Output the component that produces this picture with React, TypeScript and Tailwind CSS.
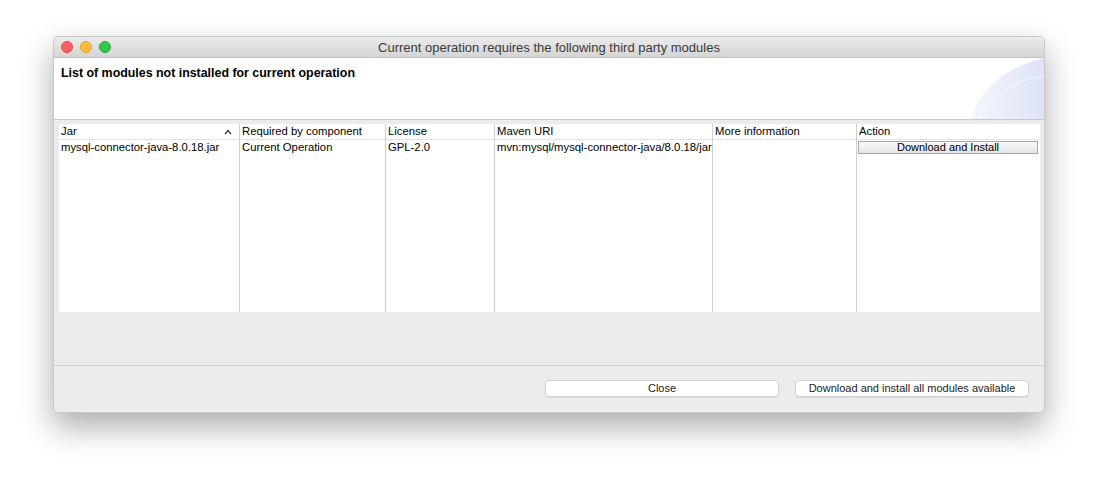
import React from "react";

const cols = [
  { w: 181, h: "Jar", v: "mysql-connector-java-8.0.18.jar" },
  { w: 146, h: "Required by component", v: "Current Operation" },
  { w: 109, h: "License", v: "GPL-2.0" },
  { w: 218, h: "Maven URI", v: "mvn:mysql/mysql-connector-java/8.0.18/jar" },
  { w: 144, h: "More information", v: "" },
  { w: 183, h: "Action", v: "" },
];

export default function App() {
  return (
    <div
      className="w-[1100px] h-[488px] bg-white pl-[53px] pt-[36px]"
      style={{ fontFamily: '"Liberation Sans", Arial, sans-serif' }}
    >
      <div className="w-[992px] h-[377px] rounded-[5px] bg-[#ececec] flex flex-col overflow-hidden border border-[#c9c9c9] shadow-[0_14px_32px_rgba(0,0,0,0.33)]">
        {/* Title bar */}
        <div className="relative h-[21px] shrink-0 bg-gradient-to-b from-[#ebebeb] to-[#d5d5d5] border-b border-[#c0c0c0] flex items-center justify-center">
          <div className="absolute left-[7px] top-[4px] flex gap-[7px]">
            <span className="w-[12px] h-[12px] rounded-full bg-[#fc605c] border border-[#de4a46]" />
            <span className="w-[12px] h-[12px] rounded-full bg-[#fdbc40] border border-[#dea236]" />
            <span className="w-[12px] h-[12px] rounded-full bg-[#34c84a] border border-[#27aa35]" />
          </div>
          <span className="text-[13px] text-[#3a3a3a] leading-none">
            Current operation requires the following third party modules
          </span>
        </div>
        {/* Header */}
        <div className="relative h-[62px] shrink-0 bg-white border-b border-[#c8c8c8] overflow-hidden">
          <div className="pl-[7px] pt-[6px] text-[12.4px] font-bold text-black">
            List of modules not installed for current operation
          </div>
          <svg className="absolute right-0 top-0" width="75" height="62" viewBox="0 0 75 62">
            <defs>
              <linearGradient id="g1" x1="0" y1="0" x2="1" y2="0">
                <stop offset="0" stopColor="#f4f6fd" />
                <stop offset="1" stopColor="#dde4f6" />
              </linearGradient>
            </defs>
            <path d="M75 0 L75 62 L2 62 C10 30 40 8 75 0 Z" fill="url(#g1)" />
            <path d="M75 18 C45 22 20 40 10 62" stroke="#ffffff" strokeOpacity="0.6" strokeWidth="1" fill="none" />
          </svg>
        </div>
        {/* Table area */}
        <div className="flex-1 pt-[4px] pl-[5px] pr-[4px] border-b border-[#d0d0d0]">
          <div className="h-[188px] bg-white flex text-[11.3px] text-black">
            {cols.map((c, i) => (
              <div
                key={i}
                className={`flex flex-col shrink-0 overflow-hidden ${i < cols.length - 1 ? "border-r border-[#cfcfcf]" : ""}`}
                style={{ width: c.w }}
              >
                <div className="h-[16px] pt-[1px] border-b border-[#e3e3e3] flex items-center px-[2px] justify-between leading-none">
                  <span>{c.h}</span>
                  {i === 0 && (
                    <svg width="8" height="6" viewBox="0 0 8 6" className="mr-[5px]">
                      <path d="M1 5 L4 1.5 L7 5" stroke="#333" strokeWidth="1.2" fill="none" />
                    </svg>
                  )}
                </div>
                <div className="h-[15px] flex items-center px-[2px] leading-none whitespace-nowrap">
                  {c.v}
                </div>
                {i === cols.length - 1 && (
                  <div className="-mt-[14px] ml-[1px] mr-[2px] h-[13px] border border-[#a8a8a8] bg-gradient-to-b from-[#fafafa] to-[#e4e4e4] flex items-center justify-center leading-none text-[11px]">
                    Download and Install
                  </div>
                )}
              </div>
            ))}
          </div>
        </div>
        {/* Bottom bar */}
        <div className="h-[46px] shrink-0 flex justify-end items-start pt-[14px] pr-[15px] gap-[16px]">
          <button className="w-[234px] h-[17px] rounded-[4px] bg-white border border-[#d2d2d2] shadow-[0_1px_1px_rgba(0,0,0,0.08)] text-[11px] text-[#222] leading-none">
            Close
          </button>
          <button className="w-[234px] h-[17px] rounded-[4px] bg-white border border-[#d2d2d2] shadow-[0_1px_1px_rgba(0,0,0,0.08)] text-[11px] text-[#222] leading-none">
            Download and install all modules available
          </button>
        </div>
      </div>
    </div>
  );
}
